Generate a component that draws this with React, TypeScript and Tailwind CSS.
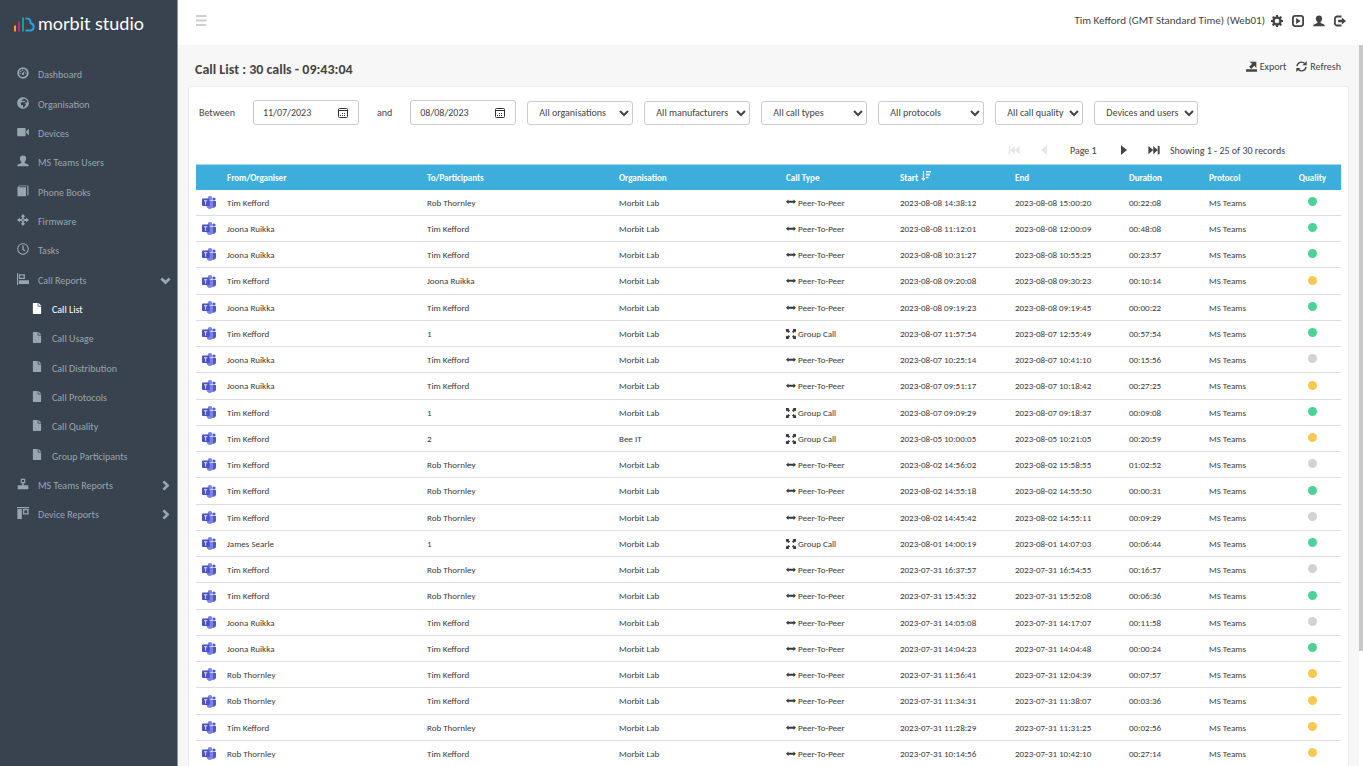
import type { ReactNode } from "react";
import { FaFile, FaGlobeAfrica, FaRegClock } from "react-icons/fa";

type Quality = "good" | "fair" | "none";
type Call = [from: string, to: string, start: string, end: string, duration: string, quality: Quality];

const CALLS: Call[] = [
  ["Tim Kefford", "Rob Thornley", "2023-08-08 14:38:12", "2023-08-08 15:00:20", "00:22:08", "good"],
  ["Joona Ruikka", "Tim Kefford", "2023-08-08 11:12:01", "2023-08-08 12:00:09", "00:48:08", "good"],
  ["Joona Ruikka", "Tim Kefford", "2023-08-08 10:31:27", "2023-08-08 10:55:25", "00:23:57", "good"],
  ["Tim Kefford", "Joona Ruikka", "2023-08-08 09:20:08", "2023-08-08 09:30:23", "00:10:14", "fair"],
  ["Joona Ruikka", "Tim Kefford", "2023-08-08 09:19:23", "2023-08-08 09:19:45", "00:00:22", "good"],
  ["Tim Kefford", "1", "2023-08-07 11:57:54", "2023-08-07 12:55:49", "00:57:54", "good"],
  ["Joona Ruikka", "Tim Kefford", "2023-08-07 10:25:14", "2023-08-07 10:41:10", "00:15:56", "none"],
  ["Joona Ruikka", "Tim Kefford", "2023-08-07 09:51:17", "2023-08-07 10:18:42", "00:27:25", "fair"],
  ["Tim Kefford", "1", "2023-08-07 09:09:29", "2023-08-07 09:18:37", "00:09:08", "good"],
  ["Tim Kefford", "2", "2023-08-05 10:00:05", "2023-08-05 10:21:05", "00:20:59", "fair"],
  ["Tim Kefford", "Rob Thornley", "2023-08-02 14:56:02", "2023-08-02 15:58:55", "01:02:52", "none"],
  ["Tim Kefford", "Rob Thornley", "2023-08-02 14:55:18", "2023-08-02 14:55:50", "00:00:31", "good"],
  ["Tim Kefford", "Rob Thornley", "2023-08-02 14:45:42", "2023-08-02 14:55:11", "00:09:29", "none"],
  ["James Searle", "1", "2023-08-01 14:00:19", "2023-08-01 14:07:03", "00:06:44", "good"],
  ["Tim Kefford", "Rob Thornley", "2023-07-31 16:37:57", "2023-07-31 16:54:55", "00:16:57", "none"],
  ["Tim Kefford", "Rob Thornley", "2023-07-31 15:45:32", "2023-07-31 15:52:08", "00:06:36", "good"],
  ["Joona Ruikka", "Tim Kefford", "2023-07-31 14:05:08", "2023-07-31 14:17:07", "00:11:58", "none"],
  ["Joona Ruikka", "Tim Kefford", "2023-07-31 14:04:23", "2023-07-31 14:04:48", "00:00:24", "good"],
  ["Rob Thornley", "Tim Kefford", "2023-07-31 11:56:41", "2023-07-31 12:04:39", "00:07:57", "fair"],
  ["Rob Thornley", "Tim Kefford", "2023-07-31 11:34:31", "2023-07-31 11:38:07", "00:03:36", "fair"],
  ["Tim Kefford", "Rob Thornley", "2023-07-31 11:28:29", "2023-07-31 11:31:25", "00:02:56", "fair"],
  ["Rob Thornley", "Tim Kefford", "2023-07-31 10:14:56", "2023-07-31 10:42:10", "00:27:14", "fair"],
];

const QUALITY_CLASS: Record<Quality, string> = {
  good: "bg-[#4bd396]",
  fair: "bg-[#f9c851]",
  none: "bg-[#d3d3d3]",
};

function Icon({ children, className = "size-3" }: { children: ReactNode; className?: string }) {
  return (
    <svg viewBox="0 0 16 16" fill="currentColor" className={`${className} shrink-0`} aria-hidden="true">
      {children}
    </svg>
  );
}

const DashboardIcon = (
  <Icon>
    <circle cx="8" cy="8" r="6.5" fill="none" stroke="currentColor" strokeWidth="2.4" />
    <path d="M11 4.500 9.200 8.600A1.500 1.500 0 1 1 7.500 7.700z" />
    <circle cx="7.600" cy="4.200" r="1" />
    <circle cx="5" cy="5.600" r="1" />
    <circle cx="4.200" cy="8.300" r="1" />
    <circle cx="11.800" cy="8.300" r="1" />
  </Icon>
);
const VideoIcon = (
  <Icon>
    <path d="M1.500 2.500h8.800a1.200 1.200 0 0 1 1.200 1.200v8.600a1.200 1.200 0 0 1-1.200 1.200H1.500A1.200 1.200 0 0 1 .3 12.300V3.700a1.200 1.200 0 0 1 1.200-1.200zM12.300 7l3.500-3.500v9L12.300 9z" />
  </Icon>
);
const UserIcon = (
  <Icon>
    <path d="M8 .5c2.500 0 4.200 1.600 4.200 4.200 0 1.900-.9 3.600-2.100 4.500v1.200c.3.500 1.600 1 3.300 1.600 1.500.6 2.300 1.300 2.300 3H.3c0-1.700.8-2.400 2.300-3 1.700-.6 3-1.100 3.300-1.600V9.200C4.700 8.300 3.800 6.600 3.800 4.700 3.800 2.100 5.500.5 8 .5z" />
  </Icon>
);
const BookIcon = (
  <Icon>
    <path d="M3 .8h10v1H3.200L2.400 3H12v12H1.500A1 1 0 0 1 .6 14V3.200z" />
    <path d="M13.400 1h2v11.500l-2 2z" opacity=".75" />
  </Icon>
);
const MoveIcon = (
  <Icon>
    <path
      fillRule="evenodd"
      d="m8 0 3.200 3.800H9.200v2L10.200 6.800h2V4.800L16 8l-3.800 3.200V9.200h-2l-1 1v2h2L8 16l-3.200-3.800h2v-2l-1-1h-2v2L0 8l3.800-3.200v2h2l1-1v-2h-2zM8 6.800 6.800 8 8 9.200 9.200 8z"
    />
  </Icon>
);
const AlignLeftIcon = (
  <Icon>
    <path d="M0 0h1.500v16H0zM2.500 1.500h8V8h-8zM4.200 3.200v3h4.600v-3zM2.500 9.500H16v5H2.500z" fillRule="evenodd" />
  </Icon>
);
const AlignBottomIcon = (
  <Icon>
    <path d="M5 1h6v6H5zm1.600 1.600v2.800h2.800V2.600zM7 7h2v2.500H7zM1 9.500h14V15H1z" fillRule="evenodd" />
  </Icon>
);
const AlignTopIcon = (
  <Icon>
    <path d="M0 0h16v1.500H0zM.5 2.500h6V16h-6zM8 2.500h7.500V10H8zm1.700 1.700v4h4v-4z" fillRule="evenodd" />
  </Icon>
);
const PageIcon = <FaFile className="h-[11px] w-3 shrink-0" />;

type NavItem = { label: string; icon: ReactNode; sub?: boolean; active?: boolean; caret?: "down" | "right" };

const NAV: NavItem[] = [
  { label: "Dashboard", icon: DashboardIcon },
  { label: "Organisation", icon: <FaGlobeAfrica className="size-3 shrink-0" /> },
  { label: "Devices", icon: VideoIcon },
  { label: "MS Teams Users", icon: UserIcon },
  { label: "Phone Books", icon: BookIcon },
  { label: "Firmware", icon: MoveIcon },
  { label: "Tasks", icon: <FaRegClock className="size-3 shrink-0" /> },
  { label: "Call Reports", icon: AlignLeftIcon, caret: "down" },
  { label: "Call List", icon: PageIcon, sub: true, active: true },
  { label: "Call Usage", icon: PageIcon, sub: true },
  { label: "Call Distribution", icon: PageIcon, sub: true },
  { label: "Call Protocols", icon: PageIcon, sub: true },
  { label: "Call Quality", icon: PageIcon, sub: true },
  { label: "Group Participants", icon: PageIcon, sub: true },
  { label: "MS Teams Reports", icon: AlignBottomIcon, caret: "right" },
  { label: "Device Reports", icon: AlignTopIcon, caret: "right" },
];

function Sidebar() {
  return (
    <aside className="w-[178px] shrink-0 border-r border-[#8b929c] bg-[#39424f]">
      <a href="#" className="flex h-12 items-center gap-[3px] pl-[14px] text-white">
        <svg viewBox="0 0 42 30" className="h-[15px] w-[21px]" aria-hidden="true">
          <path fill="#f5a11c" d="M0 17h4v12H0z" />
          <path fill="#c4257c" d="M8 9h4v20H8z" />
          <path fill="#17a08c" d="M16 1h4v28h-4z" />
          <path
            fill="none"
            stroke="#2b9fdc"
            strokeWidth="4"
            d="M23 3h3c5 0 7.500 3 7 9 4 1.500 6.500 4 6.500 7.500 0 4.500-3 7.500-8 7.500H23"
          />
        </svg>
        <span className="pb-[2px] font-[Lato] text-[18px] leading-6">morbit studio</span>
      </a>
      <nav className="pt-3">
        <ul>
          {NAV.map((item) => (
            <li key={item.label} className="h-[29px] nth-[3n+2]:h-[30px]">
              <a
                href="#"
                className={`flex h-full items-center gap-[9px] text-[10px] ${item.sub ? "pl-[31px]" : "pl-[17px]"} ${item.active ? "text-white" : "text-[#98a6ad]"}`}
              >
                <span className="pb-[3px]">{item.icon}</span>
                <span>{item.label}</span>
                {item.caret && (
                  <Icon className="mr-[6px] ml-auto size-[11px]">
                    <path
                      d={item.caret === "down" ? "M2 5l6 6 6-6" : "M5 2l6 6-6 6"}
                      fill="none"
                      stroke="currentColor"
                      strokeWidth="4"
                    />
                  </Icon>
                )}
              </a>
            </li>
          ))}
        </ul>
      </nav>
    </aside>
  );
}

function Header() {
  return (
    <header className="flex h-[45px] shrink-0 items-center justify-between bg-white pr-[17px] pb-1 pl-[18px]">
      <button type="button" aria-label="Toggle menu" className="text-[#cfcfcf]">
        <Icon className="size-[11px]">
          <path d="M0 0h15v3H0zM0 6.500h15v3H0zM0 13h15v3H0z" />
        </Icon>
      </button>
      <div className="flex items-center gap-[6px] text-[#444]">
        <span className="pt-[2px] text-[11px]">Tim Kefford (GMT Standard Time) (Web01)</span>
        <div className="flex gap-[9px]">
          <button type="button" aria-label="Settings">
            <Icon>
              <path
                fillRule="evenodd"
                d="M6.700 0h2.600l.4 2.200 1.300.6 1.900-1.400 1.800 1.800-1.400 1.900.6 1.300 2.100.4v2.600l-2.200.4-.5 1.200 1.300 1.900-1.800 1.800-1.800-1.300-1.300.6L9.300 16H6.700l-.4-2-1.300-.6-1.900 1.300-1.800-1.800L2.600 11l-.5-1.200L0 9.400V6.800l2.100-.4.6-1.300L1.400 3.200l1.800-1.800 1.900 1.400 1.200-.6zM8 5a3 3 0 1 0 0 6.100A3 3 0 0 0 8 5z"
              />
            </Icon>
          </button>
          <button type="button" aria-label="Play">
            <Icon>
              <rect x="1.200" y="1.200" width="13.600" height="13.600" rx="3" fill="none" stroke="currentColor" strokeWidth="2.400" />
              <path d="M5.500 4v8l6-4z" />
            </Icon>
          </button>
          <button type="button" aria-label="Profile">
            {UserIcon}
          </button>
          <button type="button" aria-label="Log out">
            <Icon>
              <path
                d="M10 2H4.200A3 3 0 0 0 1.200 5v6a3 3 0 0 0 3 3H10"
                fill="none"
                stroke="currentColor"
                strokeWidth="2.400"
              />
              <path d="M10.500 3.200 16 8l-5.500 4.800V9.800h-5V6.200h5z" />
            </Icon>
          </button>
        </div>
      </div>
    </header>
  );
}

function DateField({ label, value }: { label: string; value: string }) {
  return (
    <>
      <label htmlFor={label}>{label}</label>
      <div className="flex h-[25px] w-[106px] items-center justify-between rounded-[3px] border border-[#ccc] pr-[10px] pl-[9px]">
        <input id={label} defaultValue={value} className="w-16 outline-none" />
        <svg viewBox="0 0 10 10" className="size-[10px]" aria-hidden="true">
          <rect x=".5" y=".5" width="9" height="9" rx="1" fill="none" stroke="#333" />
          <path fill="#333" d="M1 2h8v1H1zM4 5h1v1H4zM6 5h1v1H6zM2 7h1v1H2zM4 7h1v1H4zM6 7h1v1H6z" />
        </svg>
      </div>
    </>
  );
}

const FILTERS = [
  { label: "All organisations", width: "w-[106px]" },
  { label: "All manufacturers", width: "w-[106px]" },
  { label: "All call types", width: "w-[106px]" },
  { label: "All protocols", width: "w-[106px]" },
  { label: "All call quality", width: "w-[88px]" },
  { label: "Devices and users", width: "w-[104px]" },
];

function Filters() {
  return (
    <form className="flex items-center pl-[3px] text-[10px]">
      <div className="flex items-center gap-[18px]">
        <DateField label="Between" value="11/07/2023" />
        <DateField label="and" value="08/08/2023" />
      </div>
      <div className="ml-[11px] flex gap-[11px]">
        {FILTERS.map((f) => (
          <select
            key={f.label}
            aria-label={f.label}
            className={`${f.width} h-6 rounded-[3px] border border-[#ccc] bg-white pl-[7px]`}
          >
            <option>{f.label}</option>
          </select>
        ))}
      </div>
    </form>
  );
}

function Pager() {
  return (
    <div className="mt-3 mb-px flex h-[26px] items-center pl-[812px] text-[10px]">
      <button type="button" aria-label="First page" disabled className="text-[#e6e6e6]">
        <Icon>
          <path d="M1 2.500h2v11H1zM9 2.500v11L3 8zM15.500 2.500v11L9 8z" />
        </Icon>
      </button>
      <button type="button" aria-label="Previous page" disabled className="ml-[18px] text-[#e6e6e6]">
        <Icon>
          <path d="M12 1.500v13L4 8z" />
        </Icon>
      </button>
      <span className="ml-5 w-12">Page 1</span>
      <button type="button" aria-label="Next page">
        <Icon>
          <path d="M4 1.500v13L12 8z" />
        </Icon>
      </button>
      <button type="button" aria-label="Last page" className="ml-[18px]">
        <Icon>
          <path d="M13 2.500h2.500v11H13zM7 2.500v11L13 8zM.5 2.500v11L7 8z" />
        </Icon>
      </button>
      <span className="ml-[10px]">Showing 1 - 25 of 30 records</span>
    </div>
  );
}

function TeamsLogo() {
  return (
    <svg viewBox="0 0 28 26" className="ml-px h-[13px] w-[14px]" role="img" aria-label="Microsoft Teams">
      <circle cx="24" cy="6" r="3.200" fill="#5059c9" />
      <circle cx="16" cy="4.500" r="4.500" fill="#7b83eb" />
      <path fill="#5059c9" d="M19 10h9v8c0 3.500-2 5.500-5.500 5.500H19z" />
      <path fill="#7b83eb" d="M9 9.500h13V19c0 4-3 7-6.500 7S9 23 9 19z" />
      <path fill="#5a62c9" d="M9 9.500h7V20H9z" />
      <rect y="5" width="14.500" height="15" rx="1.500" fill="#4b53bc" />
      <path fill="#dfe1f7" d="M4 8.500h6.500v2H8.200v7H6.300v-7H4z" />
    </svg>
  );
}

function CallType({ group }: { group: boolean }) {
  return (
    <span className="flex items-center gap-[2px]">
      <Icon className="size-[10px]">
        {group ? (
          <path d="M0 0h5.500L4 1.500l2.500 2.500L4 6.500 1.500 4 0 5.500zM16 0v5.500L14.500 4 12 6.500 9.500 4 12 1.500 10.500 0zM0 16v-5.500L1.500 12 4 9.500 6.500 12 4 14.500 5.500 16zM16 16h-5.500l1.500-1.500L9.500 12 12 9.500l2.500 2.500 1.500-1.500z" />
        ) : (
          <path d="M0 7.500 4 4v2h8V4l4 3.500L12 11V9H4v2z" />
        )}
      </Icon>
      {group ? "Group Call" : "Peer-To-Peer"}
    </span>
  );
}

const COLUMNS = [
  { label: "", width: "w-[26px]" },
  { label: "From/Organiser", width: "w-[200px]" },
  { label: "To/Participants", width: "w-[192px]" },
  { label: "Organisation", width: "w-[167px]" },
  { label: "Call Type", width: "w-[114px]" },
  { label: "Start", width: "w-[115px]" },
  { label: "End", width: "w-[114px]" },
  { label: "Duration", width: "w-[80px]" },
  { label: "Protocol", width: "w-[80px]" },
  { label: "Quality", width: "w-[57px]" },
];

function CallTable() {
  return (
    <table className="w-full table-fixed border-collapse text-left text-[9px] text-[#3a3a3a]">
      <thead>
        <tr className="h-[25px] border-t border-[#a5d9ef] bg-[#3daedc] text-white">
          {COLUMNS.map((c) => (
            <th key={c.label} className={`${c.width} ${c.label === "Quality" ? "text-center" : "pl-[5px]"} font-bold`}>
              {c.label === "Start" ? (
                <span className="flex items-center gap-[3px]">
                  Start
                  <Icon className="mb-[3px] size-[10px]">
                    <path d="M3 0h2v11h2.500L4 16 .5 11H3zM8 0h8v2.500H8zM8 4.500h6V7H8zM8 9h4v2.500H8z" />
                  </Icon>
                </span>
              ) : (
                c.label
              )}
            </th>
          ))}
        </tr>
      </thead>
      <tbody>
        {CALLS.map(([from, to, start, end, duration, quality]) => {
          const group = /^\d+$/.test(to);
          return (
            <tr key={start} className="h-[26px] border-b border-[#ddd] nth-[4n]:h-[27px]">
              <td className="pl-[5px]">
                <TeamsLogo />
              </td>
              <td className="pl-[5px]">{from}</td>
              <td className="pl-[5px]">{to}</td>
              <td className="pl-[5px]">{to === "2" ? "Bee IT" : "Morbit Lab"}</td>
              <td className="pl-[5px]">
                <CallType group={group} />
              </td>
              <td className="pl-[5px]">{start}</td>
              <td className="pl-[5px]">{end}</td>
              <td className="pl-[5px]">{duration}</td>
              <td className="pl-[5px]">MS Teams</td>
              <td>
                <span
                  role="img"
                  aria-label={quality}
                  className={`mx-auto mb-[2px] block size-[9px] rounded-full ${QUALITY_CLASS[quality]}`}
                />
              </td>
            </tr>
          );
        })}
      </tbody>
    </table>
  );
}

export default function App() {
  return (
    <div className="flex h-screen overflow-hidden bg-[#f7f7f7] font-[Carlito,Calibri,Lato,sans-serif] text-[#444]">
      <Sidebar />
      <div className="flex min-w-0 flex-1 flex-col">
        <Header />
        <div className="flex min-h-0 flex-1">
          <main className="min-w-0 flex-1 overflow-hidden px-[10px]">
            <div className="flex h-[41px] items-center justify-between pr-2 pl-[7px]">
              <h1 className="pt-[7px] text-[14px] font-bold">Call List : 30 calls - 09:43:04</h1>
              <div className="flex gap-[10px] pt-[2px] text-[10px]">
                <button type="button" className="flex items-center gap-[3px]">
                  <Icon className="size-[11px]">
                    <path d="M0 12h16v3.500H0zM5 1h10v9l-3-3-4.500 4.500L4.500 8.500 9 4z" />
                  </Icon>
                  Export
                </button>
                <button type="button" className="flex items-center gap-[3px]">
                  <Icon className="size-[11px]">
                    <path
                      d="M1.500 7.500a6.500 6.500 0 0 1 11-4M14.500 8.500a6.500 6.500 0 0 1-11 4"
                      fill="none"
                      stroke="currentColor"
                      strokeWidth="2"
                    />
                    <path d="M15.500 0v6H9.500zM.5 16v-6h6z" />
                  </Icon>
                  Refresh
                </button>
              </div>
            </div>
            <section className="rounded-[3px] border border-[#ececec] bg-white px-[7px] pt-[13px]">
              <Filters />
              <Pager />
              <CallTable />
            </section>
          </main>
          <div className="w-1 shrink-0 bg-white">
            <div className="h-[84%] bg-[#c8c8c8]" />
          </div>
        </div>
      </div>
    </div>
  );
}
